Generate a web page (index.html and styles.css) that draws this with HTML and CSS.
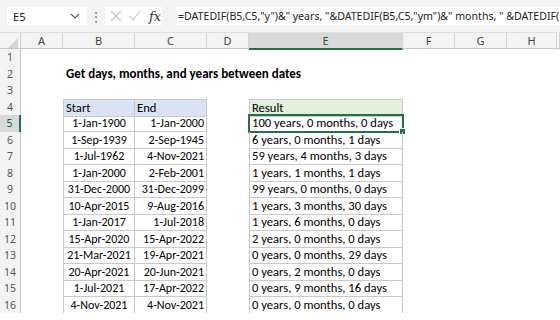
FILE: index.html
```html
<!DOCTYPE html>
<html lang="en">
<head>
    <meta charset="UTF-8">
    <title>DATEDIF - years, months, days</title>
    <link rel="stylesheet" href="styles.css">
</head>
<body>

    <div class="topbar">
        <div class="namebox">
            <span>E5</span>
            <svg class="chev" width="10" height="6" viewBox="0 0 10 6"><path d="M1 1 L5 5 L9 1" fill="none" stroke="#555" stroke-width="1.1"/></svg>
        </div>
        <div class="dots">⋮</div>
        <div class="fxbox">
            <svg width="12" height="12" viewBox="0 0 12 12"><path d="M1 1 L11 11 M11 1 L1 11" stroke="#c4c4c4" stroke-width="1.1"/></svg>
            <svg width="13" height="12" viewBox="0 0 13 12"><path d="M1 6 L5 10 L12 1" fill="none" stroke="#c4c4c4" stroke-width="1.1"/></svg>
            <span class="fx">fx</span>
        </div>
        <div class="formula">=DATEDIF(B5,C5,"y")&amp;" years, "&amp;DATEDIF(B5,C5,"ym")&amp;" months, " &amp;DATEDIF(</div>
    </div>

    <div class="sheet">
        <div class="row colheads">
            <div class="corner"><svg width="10" height="10" viewBox="0 0 10 10"><path d="M10 0 L10 10 L0 10 Z" fill="#d6d6d6"/></svg></div>
            <div class="ch">A</div>
            <div class="ch">B</div>
            <div class="ch">C</div>
            <div class="ch">D</div>
            <div class="ch sel">E</div>
            <div class="ch">F</div>
            <div class="ch">G</div>
            <div class="ch">H</div>
            <div class="ch"></div>
        </div>
        <div id="rows"></div>
    </div>

    <script>
        const datos = [
            ['1-Jan-1900', '1-Jan-2000', '100 years, 0 months, 0 days'],
            ['1-Sep-1939', '2-Sep-1945', '6 years, 0 months, 1 days'],
            ['1-Jul-1962', '4-Nov-2021', '59 years, 4 months, 3 days'],
            ['1-Jan-2000', '2-Feb-2001', '1 years, 1 months, 1 days'],
            ['31-Dec-2000', '31-Dec-2099', '99 years, 0 months, 0 days'],
            ['10-Apr-2015', '9-Aug-2016', '1 years, 3 months, 30 days'],
            ['1-Jan-2017', '1-Jul-2018', '1 years, 6 months, 0 days'],
            ['15-Apr-2020', '15-Apr-2022', '2 years, 0 months, 0 days'],
            ['21-Mar-2021', '19-Apr-2021', '0 years, 0 months, 29 days'],
            ['20-Apr-2021', '20-Jun-2021', '0 years, 2 months, 0 days'],
            ['1-Jul-2021', '17-Apr-2022', '0 years, 9 months, 16 days'],
            ['4-Nov-2021', '4-Nov-2021', '0 years, 0 months, 0 days']
        ];

        function fila(n, celdas) {
            return `<div class="row">
                <div class="rh ${n === 5 ? 'sel' : ''}">${n}</div>
                ${celdas}
            </div>`;
        }

        function vacio(k) { return '<div class="c"></div>'.repeat(k); }

        function dibujar() {
            let html = '';
            html += fila(1, vacio(9));
            html += fila(2, `<div class="c"></div><div class="c title">Get days, months, and years between dates</div>` + vacio(7));
            html += fila(3, vacio(9));
            html += fila(4, `<div class="c"></div>
                <div class="c t hd first top">Start</div>
                <div class="c t hd top">End</div>
                <div class="c"></div>
                <div class="c t hd green first top">Result</div>` + vacio(4));
            datos.forEach((d, i) => {
                const n = i + 5;
                html += fila(n, `<div class="c"></div>
                    <div class="c t first center date">${d[0]}</div>
                    <div class="c t right date">${d[1]}</div>
                    <div class="c"></div>
                    <div class="c t first ${n === 5 ? 'active' : ''}">${d[2]}${n === 5 ? '<span class="handle"></span>' : ''}</div>` + vacio(4));
            });
            document.getElementById('rows').innerHTML = html;
        }

        dibujar();
    </script>
</body>
</html>
```

FILE: styles.css
```css
:root { --green: #217346; --grid: #d4d4d4; --head: #f3f3f3; }
body { margin: 0; background: #fff; font-family: Carlito, Lato, sans-serif; color: #000; overflow: hidden; }

/* BARRA DE FORMULA */
.topbar {
    height: 32px;
    background: #f3f3f3;
    display: flex;
    align-items: center;
    font-family: "Noto Sans", "Open Sans", sans-serif;
    font-size: 11.2px;
    color: #222;
}
.namebox {
    margin-left: 7px;
    width: 80px; height: 18px;
    background: #fff;
    display: flex; align-items: center; justify-content: space-between;
    padding: 0 7px 0 6px;
    box-sizing: border-box;
}
.dots { width: 18px; text-align: center; color: #777; font-size: 12px; }
.fxbox {
    width: 57px; height: 18px;
    background: #fff;
    display: flex; align-items: center; gap: 6px;
    padding-left: 5px;
    box-sizing: border-box;
}
.fx { font-family: "DejaVu Serif", "Liberation Serif", serif; font-style: italic; font-size: 13px; color: #333; margin-left: 2px; }
.formula {
    margin-left: 14px;
    flex: 1;
    height: 18px; line-height: 18px;
    background: #fff;
    padding-left: 2px;
    font-size: 10.6px;
    white-space: nowrap; overflow: hidden;
}

/* HOJA */
.sheet { border-top: 1px solid #e1e1e1; }
.row {
    display: grid;
    grid-template-columns: 21px 42px 72px 72px 42px 154px 52px 52px 50px 1fr;
    height: 16.5px;
    font-size: 12.6px;
    line-height: 16px;
}
.colheads { height: 15px; line-height: 15px; background: var(--head); border-bottom: 1px solid #c6c6c6; }
.corner { display: flex; align-items: flex-end; justify-content: flex-end; padding: 0 2px 2px 0; border-right: 1px solid var(--grid); }
.ch { text-align: center; color: #444; font-family: "Noto Sans", sans-serif; font-size: 11px; border-right: 1px solid var(--grid); }
.ch.sel { background: #d9d9d9; color: #1e5e3a; border-bottom: 2px solid var(--green); }

.rh {
    background: var(--head);
    color: #555;
    text-align: center;
    font-family: "Noto Sans", sans-serif;
    font-size: 10.5px;
    border-right: 1px solid #c6c6c6;
}
.rh.sel { background: #d9d9d9; color: #1e5e3a; border-right: 2px solid var(--green); }

.c { white-space: nowrap; position: relative; box-sizing: border-box; padding: 0 2px; }
.title { font-weight: bold; font-size: 13px; padding-left: 3px; }

/* TABLAS */
.t { border-right: 1px solid #c9c9c9; border-bottom: 1px solid #c9c9c9; }
.t.first { border-left: 1px solid #c9c9c9; }
.t.top { border-top: 1px solid #c9c9c9; }
.hd { background: #dae3f3; }
.hd.green { background: #e2efda; }
.date { font-size: 12px; }
.center { text-align: center; }
.right { text-align: right; }

.active { outline: 2px solid var(--green); outline-offset: -1px; }
.handle {
    position: absolute; right: -4px; bottom: -4px;
    width: 5px; height: 5px;
    background: var(--green);
    border: 1px solid #fff;
}
```
